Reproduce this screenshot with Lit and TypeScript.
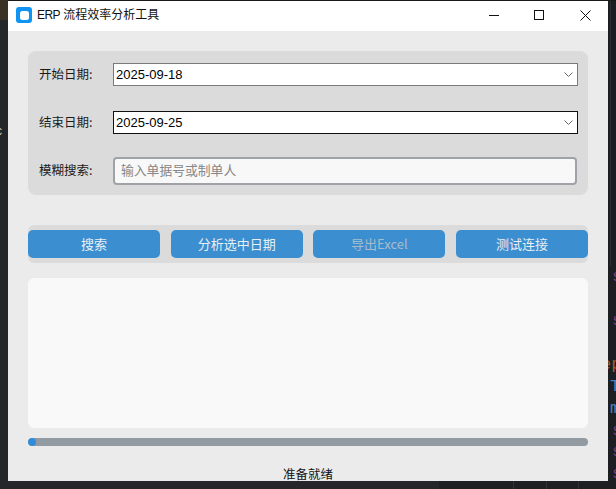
import { LitElement, html, css } from "lit";
import { customElement } from "lit/decorators.js";

const chevron = html`<svg class="chev" width="9" height="5" viewBox="0 0 9 5"><path d="M0.5 0.5 L4.5 4.5 L8.5 0.5" fill="none" stroke="#666" stroke-width="1"/></svg>`;

@customElement("app-root")
export class AppRoot extends LitElement {
  static styles = css`
    :host {
      display: block; position: relative; width: 616px; height: 489px; overflow: hidden;
      background: #24262a;
      font-family: "Noto Sans CJK SC", "Liberation Sans", sans-serif;
    }
    .topstrip { position: absolute; left: 0; top: 0; width: 8px; height: 20px; background: #3a3226; }
    .topline { position: absolute; left: 8px; right: 0; top: 0; height: 1px; background: #1a1a18; }
    .rightpane { position: absolute; left: 608px; top: 1px; width: 8px; height: 480px; background: #1c1e22; }
    .rule { position: absolute; left: 610px; top: 1px; width: 1px; height: 265px; background: #2c2e33; }
    .code { position: absolute; font: 17px/18px "Liberation Mono", monospace; left: 612px; }
    .purple { color: #6f3f80; }
    .orange { color: #a8582c; left: 601px; }
    .blue { color: #4a80b8; left: 610px; }
    .peek { position: absolute; left: 0; top: 124px; font: 12px/14px "Liberation Sans", sans-serif; color: #c8c8b0; transform: translateX(-4px); }
    .bottom { position: absolute; left: 8px; right: 0; top: 481px; height: 8px; background: #24262a; }
    .bottom-right { position: absolute; left: 439px; right: 0; top: 481px; height: 8px; background: #1e1f22; display: flex; }
    .bottom-right i { position: absolute; top: 0; width: 1px; height: 8px; background: #303236; }

    .window {
      position: absolute; left: 8px; top: 1px; width: 600px; height: 480px;
      background: #ebebeb; display: flex; flex-direction: column; overflow: hidden;
    }
    .titlebar { height: 30px; flex: none; box-sizing: border-box; background: #fff; display: flex; align-items: center; padding: 0 0 2px 8px; }
    .appicon { width: 16px; height: 16px; border-radius: 3px; background: #0f94f5; display: flex; align-items: center; justify-content: center; }
    .appicon i { display: block; width: 9px; height: 9px; border-radius: 2.5px; background: #fff; }
    .title { font-size: 12px; line-height: 16px; color: #111; margin-left: 5px; flex: 1; font-family: "Liberation Sans", "Noto Sans CJK SC", sans-serif; }
    .latin { letter-spacing: -0.6px; }
    .controls { display: flex; align-items: center; }
    .ctl { width: 46px; height: 28px; display: flex; align-items: center; justify-content: center; }
    .ctl.min { box-sizing: border-box; padding-left: 2px; }

    .body { flex: 1; display: flex; flex-direction: column; padding: 20px 20px 0; min-height: 0; }
    .form { height: 144px; flex: none; box-sizing: border-box; background: #dbdbdb; border-radius: 8px; padding: 12px 10px 10px 11px; display: flex; flex-direction: column; }
    .row { display: flex; align-items: center; }
    .row.second { margin-top: 25px; }
    .row.third { margin-top: 23px; }
    .label { width: 74px; box-sizing: border-box; padding-bottom: 2px; font-size: 12.5px; line-height: 16px; color: #1a1a1a; }
    .combo { flex: 1; height: 23px; box-sizing: border-box; background: #fff; border: 1px solid #7a7a7a; display: flex; align-items: center; padding: 0 2px; justify-content: space-between; font: 13px/16px "Liberation Sans", sans-serif; color: #000; }
    .combo.focus { border-color: #111; }
    .chev { margin-right: 2px; }
    .entry { flex: 1; height: 28px; margin-right: 1px; box-sizing: border-box; background: #f8f8f8; border: 2px solid #9fa3a7; border-radius: 4px; padding: 0 6px 3px; display: flex; align-items: center; font-size: 12.8px; line-height: 16px; color: #868686; }

    .actions { margin-top: 30px; height: 38px; flex: none; box-sizing: border-box; background: #dbdbdb; border-radius: 6px; padding: 5px 0; display: grid; grid-template-columns: 132px 132px 132px 132px; justify-content: space-between; }
    .btn { box-sizing: border-box; padding-bottom: 1px; background: #3b8ed0; border-radius: 5px; color: #e9eef3; font-size: 13px; line-height: 18px; display: flex; align-items: center; justify-content: center; }
    .btn.off { color: #a7bccb; }

    .text { margin-top: 15px; height: 150px; flex: none; background: #f9f9f9; border-radius: 6px; }
    .bar { margin-top: 10px; height: 8px; flex: none; background: #939ba2; border-radius: 4px; overflow: hidden; }
    .fill { width: 8px; height: 8px; background: #2f8ddc; border-radius: 4px; }
    .status { margin-top: 18px; text-align: center; font-size: 12.5px; line-height: 20px; color: #111; }
  `;

  render() {
    return html`
      <div class="topstrip"></div>
      <div class="topline"></div>
      <div class="rightpane"></div>
      <div class="rule"></div>
      <span class="code purple" style="top:268px">s</span>
      <span class="code purple" style="top:312px">s</span>
      <span class="code orange" style="top:356px">ep</span>
      <span class="code blue" style="top:378px">T</span>
      <span class="code blue" style="top:400px">m</span>
      <span class="code purple" style="top:422px">s</span>
      <span class="code purple" style="top:443px">s</span>
      <span class="code purple" style="top:465px">s</span>
      <span class="peek">c</span>
      <div class="bottom"></div>
      <div class="bottom-right"><i style="left:74px"></i><i style="left:107px"></i><i style="left:139px"></i></div>
      <div class="window">
        <div class="titlebar">
          <div class="appicon"><i></i></div>
          <div class="title"><span class="latin">ERP</span> 流程效率分析工具</div>
          <div class="controls">
            <div class="ctl min"><svg width="10" height="10" viewBox="0 0 10 10"><path d="M0 5.5H10" stroke="#111" stroke-width="1"/></svg></div>
            <div class="ctl"><svg width="10" height="10" viewBox="0 0 10 10"><rect x="0.5" y="0.5" width="9" height="9" fill="none" stroke="#111"/></svg></div>
            <div class="ctl"><svg width="11" height="11" viewBox="0 0 11 11"><path d="M0.5 0.5L10.5 10.5M10.5 0.5L0.5 10.5" stroke="#111" stroke-width="1"/></svg></div>
          </div>
        </div>
        <div class="body">
          <div class="form">
            <div class="row"><div class="label">开始日期:</div><div class="combo"><span>2025-09-18</span>${chevron}</div></div>
            <div class="row second"><div class="label">结束日期:</div><div class="combo focus"><span>2025-09-25</span>${chevron}</div></div>
            <div class="row third"><div class="label">模糊搜索:</div><div class="entry">输入单据号或制单人</div></div>
          </div>
          <div class="actions">
            <div class="btn">搜索</div>
            <div class="btn">分析选中日期</div>
            <div class="btn off">导出Excel</div>
            <div class="btn">测试连接</div>
          </div>
          <div class="text"></div>
          <div class="bar"><div class="fill"></div></div>
          <div class="status">准备就绪</div>
        </div>
      </div>
    `;
  }
}
